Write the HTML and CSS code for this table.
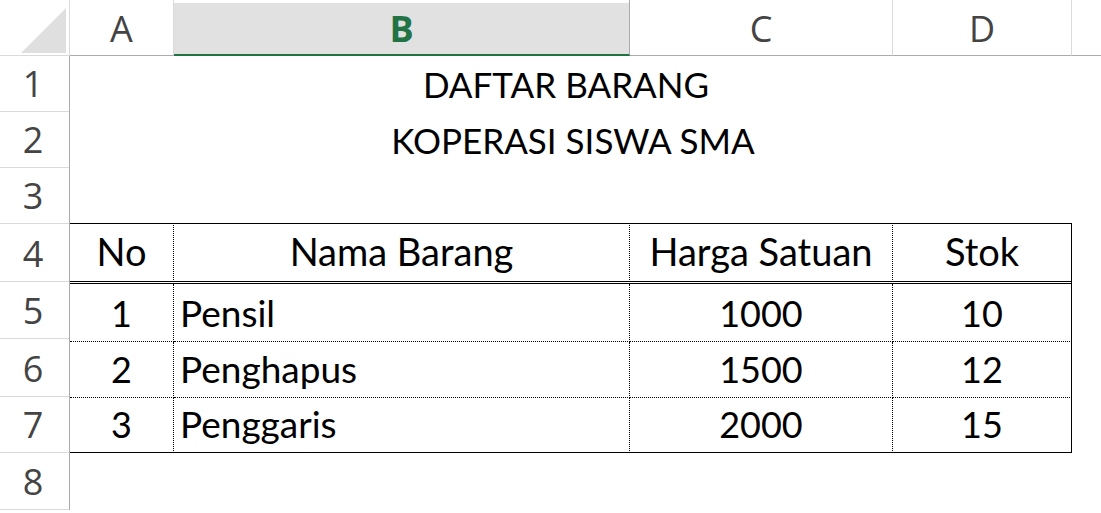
FILE: index.html
```html
<!DOCTYPE html>
<html>
<head>
<meta charset="utf-8">
<link rel="stylesheet" href="styles.css">
</head>
<body>
<div class="sheet">
  <div class="colheads">
    <div class="corner"><svg class="tri" width="46" height="46" viewBox="0 0 46 46"><polygon points="0,45 45,0 45,45" fill="#dfdfdf"/></svg></div>
    <div class="ch w-a">A</div>
    <div class="ch w-b sel">B</div>
    <div class="ch w-c">C</div>
    <div class="ch w-d">D</div>
    <div class="ch w-e"></div>
  </div>
  <div class="body">
    <div class="rowheads">
      <div class="rh r1">1</div>
      <div class="rh r2">2</div>
      <div class="rh r3">3</div>
      <div class="rh r4">4</div>
      <div class="rh r5">5</div>
      <div class="rh r6">6</div>
      <div class="rh r7">7</div>
      <div class="rh r8">8</div>
    </div>
    <div class="cells">
      <div class="c title t1">DAFTAR BARANG</div>
      <div class="c title t2">KOPERASI SISWA SMA</div>
      <div class="c blank"></div>

      <div class="c hd ctr dot">No</div>
      <div class="c hd ctr dot">Nama Barang</div>
      <div class="c hd ctr dot">Harga Satuan</div>
      <div class="c hd ctr last">Stok</div>
      <div class="c spacer"></div>

      <div class="c d5 ctr dot rowdot">1</div>
      <div class="c d5 left dot rowdot">Pensil</div>
      <div class="c d5 ctr dot rowdot">1000</div>
      <div class="c d5 ctr last rowdot">10</div>
      <div class="c spacer"></div>

      <div class="c d6 ctr dot rowdot">2</div>
      <div class="c d6 left dot rowdot">Penghapus</div>
      <div class="c d6 ctr dot rowdot">1500</div>
      <div class="c d6 ctr last rowdot">12</div>
      <div class="c spacer"></div>

      <div class="c d7 ctr dot rowend">3</div>
      <div class="c d7 left dot rowend">Penggaris</div>
      <div class="c d7 ctr dot rowend">2000</div>
      <div class="c d7 ctr last rowend">15</div>
      <div class="c spacer"></div>
    </div>
  </div>
</div>
</body>
</html>
```
FILE: styles.css
```css
* { box-sizing: border-box; }
html, body { margin: 0; padding: 0; background: #fff; }
body { width: 1101px; height: 513px; overflow: hidden; }

.sheet { display: flex; flex-direction: column; }

.colheads { display: flex; height: 56px; }
.corner {
  width: 70px; height: 56px;
  border-right: 1px solid #dadada;
  border-bottom: 1px solid #dadada;
  position: relative;
}
.tri { position: absolute; left: 21px; top: 8px; }
.ch {
  height: 56px;
  border-right: 1px solid #dadada;
  border-bottom: 1px solid #ababab;
  font-family: "Open Sans", "Noto Sans", sans-serif;
  font-size: 36px;
  line-height: 44px;
  color: #444;
  display: flex; align-items: flex-end; justify-content: center;
  padding-bottom: 4px;
}
.w-a { width: 104px; }
.w-b { width: 456px; }
.w-c { width: 263px; }
.w-d { width: 179px; }
.w-e { flex: 1; border-right: none; }
.sel {
  background: linear-gradient(#fff 0 3px, #e1e1e1 3px);
  border-right-color: #ababab;
  border-bottom: 2px solid #217346;
  color: #217346;
  font-weight: 700;
  padding-bottom: 3px;
}

.body { display: flex; }
.rowheads { width: 70px; display: flex; flex-direction: column; border-right: 1px solid #ababab; }
.rh {
  border-bottom: 1px solid #dadada;
  font-family: "Open Sans", "Noto Sans", sans-serif;
  font-size: 36px;
  line-height: 44px;
  color: #444;
  display: flex; align-items: flex-end; justify-content: center;
  padding-bottom: 5px;
  padding-right: 3px;
}
.r1, .r2, .r3 { height: 56px; }
.r4 { height: 58px; }
.r5 { height: 57px; }
.r6 { height: 58px; }
.r7 { height: 56px; }
.r8 { height: 57px; }

.cells {
  display: grid;
  grid-template-columns: 104px 456px 263px 179px 29px;
  grid-template-rows: 56px 56px 55px 61px 58px 56px 55px;
  font-family: Lato, "Liberation Sans", sans-serif;
  color: #000;
}
.c {
  font-size: 36px;
  line-height: 44px;
  display: flex; align-items: flex-end;
  padding-bottom: 6px;
  white-space: pre;
}
.title { grid-column: 1 / span 4; justify-content: center; font-size: 35px; }
.t1 { padding-right: 10px; }
.t2 { padding-left: 4px; }
.blank { grid-column: 1 / span 5; }
.spacer { padding: 0; }

.ctr { justify-content: center; }
.left { padding-left: 6px; font-size: 37px; }
.hd {
  border-top: 1px solid #000;
  border-bottom: 3px double #000;
  padding-bottom: 8px;
  font-size: 38px;
}
.dot { border-right: 1px dotted #000; }
.last { border-right: 1px solid #000; }
.rowdot { border-bottom: 1px dotted #000; }
.rowend { border-bottom: 1px solid #000; }
```
